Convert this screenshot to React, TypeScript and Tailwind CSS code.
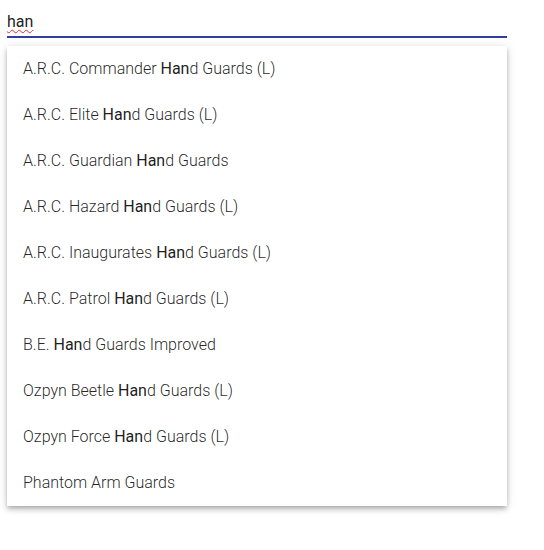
const items: [string, string, string][] = [
  ["A.R.C. Commander ", "Han", "d Guards (L)"],
  ["A.R.C. Elite ", "Han", "d Guards (L)"],
  ["A.R.C. Guardian ", "Han", "d Guards"],
  ["A.R.C. Hazard ", "Han", "d Guards (L)"],
  ["A.R.C. Inaugurates ", "Han", "d Guards (L)"],
  ["A.R.C. Patrol ", "Han", "d Guards (L)"],
  ["B.E. ", "Han", "d Guards Improved"],
  ["Ozpyn Beetle ", "Han", "d Guards (L)"],
  ["Ozpyn Force ", "Han", "d Guards (L)"],
  ["Phantom Arm Guards", "", ""],
];

export default function App() {
  return (
    <div className="min-h-[550px] w-[544px] bg-white pl-[7px] pt-[8px] font-['Roboto',sans-serif]">
      <div className="w-[500px]">
        <div className="flex h-[30px] items-center border-b-2 border-[#303f9f] text-[16px] text-black/90">
          <span className="underline decoration-wavy decoration-[#d32f2f] decoration-1 underline-offset-2">han</span>
        </div>
        <ul className="mt-[8px] bg-white shadow-[0_2px_4px_-1px_rgba(0,0,0,0.2),0_4px_5px_0_rgba(0,0,0,0.14),0_1px_10px_0_rgba(0,0,0,0.12)]">
          {items.map(([a, b, c]) => (
            <li key={a + c} className="flex h-[46px] items-center px-4 text-[16px] font-light text-black/87">
              <span>
                {a}
                {b && <span className="font-normal text-black/90">{b}</span>}
                {c}
              </span>
            </li>
          ))}
        </ul>
      </div>
    </div>
  );
}
